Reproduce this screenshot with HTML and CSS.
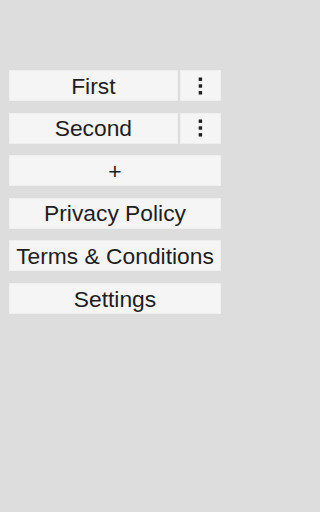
FILE: index.html
```html
<!DOCTYPE html>
<html>
<head>
<meta charset="utf-8">
<link rel="stylesheet" href="styles.css">
</head>
<body>
<div class="list">
  <div class="row">
    <div class="btn main">First</div>
    <div class="btn menu"><svg width="5" height="18" viewBox="0 0 5 18"><rect x="0.7" y="0.5" width="3.4" height="3.4"/><rect x="0.7" y="7.3" width="3.4" height="3.4"/><rect x="0.7" y="14.1" width="3.4" height="3.4"/></svg></div>
  </div>
  <div class="row">
    <div class="btn main">Second</div>
    <div class="btn menu"><svg width="5" height="18" viewBox="0 0 5 18"><rect x="0.7" y="0.5" width="3.4" height="3.4"/><rect x="0.7" y="7.3" width="3.4" height="3.4"/><rect x="0.7" y="14.1" width="3.4" height="3.4"/></svg></div>
  </div>
  <div class="row"><div class="btn full">+</div></div>
  <div class="row"><div class="btn full">Privacy Policy</div></div>
  <div class="row"><div class="btn full">Terms &amp; Conditions</div></div>
  <div class="row"><div class="btn full">Settings</div></div>
</div>
</body>
</html>
```
FILE: styles.css
```css
html, body {
  margin: 0;
  background: #dddddd;
}
body {
  width: 230px;
  height: 512px;
  font-family: "Liberation Sans", Arial, sans-serif;
}
.list {
  padding: 70px 9px 0 9px;
  display: flex;
  flex-direction: column;
  gap: 11.6px;
}
.row {
  display: flex;
  gap: 2px;
  height: 31px;
}
.btn {
  background: #f5f5f5;
  box-shadow: inset 0 0 0 1px #efefef;
  color: #1e1e1e;
  font-size: 22.8px;
  display: flex;
  align-items: center;
  justify-content: center;
  line-height: 1;
  padding-top: 1px;
  box-sizing: border-box;
}
.main { flex: 1; }
.menu { width: 41.3px; padding-top: 0; }
.full { flex: 1; }
.menu svg { fill: #1e1e1e; display: block; }
```
